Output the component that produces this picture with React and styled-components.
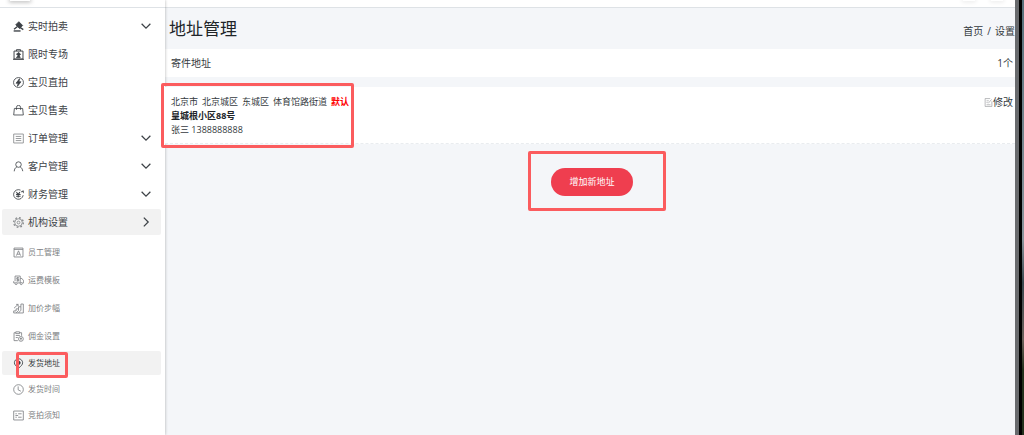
import React from 'react'
import styled, { createGlobalStyle } from 'styled-components'

const GlobalStyle = createGlobalStyle`
  * {
    box-sizing: border-box;
  }
  body {
    margin: 0;
    overflow: hidden;
    background: #f4f6f9;
    color: #343a40;
    font-family: 'Open Sans', 'Noto Sans CJK SC', sans-serif;
    font-size: 10px;
    line-height: 14px;
  }
`

const icons = {
  gavel: (
    <>
      <path d='M4 5.5 8.500 1l5.500 5.500L9.500 11z' fill='currentColor' />
      <path d='M6.500 8 1.500 12M9.500 9l5.500 3.500' strokeWidth='2' />
      <path d='M1 14.500h10' strokeWidth='2' />
    </>
  ),
  board: (
    <>
      <path d='M1.500 3h13v11.500h-13zM5 3V1h6v2M0 15h16' strokeWidth='1.4' />
      <path d='M5 7.500 8.500 5l2.500 3-2 1.500 1.500 3H5l2.500-3z' fill='currentColor' />
    </>
  ),
  bolt: (
    <>
      <circle cx='8' cy='8' r='7.200' />
      <path d='M9.500 2.500 4.500 9H7.500L6.500 13.500 11.500 7H8.500z' fill='currentColor' />
    </>
  ),
  bag: <path d='M2 5h12l1 9.500H1zM5 7V3.500a3 3 0 0 1 6 0V7' />,
  list: <path d='M1 1.500h14v13H1zM4 5h8M4 8h8M4 11h8' />,
  user: <path d='M8 1.200a4 4 0 0 1 0 8 4 4 0 0 1 0-8zM5.500 8.700C3 10 2 12 1.800 15M10.500 8.700C13 10 13.600 12 14.200 14.800' />,
  money: (
    <>
      <path d='M14.800 9A7 7 0 1 1 11 1.700M15.200 6l-.7-4M11.500 4.200l4-1' />
      <path d='M5 4.500 7.500 8 10 4.500M4.500 8h6.500M4.500 10.500h6.500M7.500 8v4.500' strokeWidth='1.5' />
    </>
  ),
  gear: (
    <>
      <circle cx='8' cy='8' r='5.500' />
      <circle cx='8' cy='8' r='7' strokeWidth='2' strokeDasharray='2.500 3' />
      <circle cx='8' cy='8' r='2' />
    </>
  ),
  staff: <path d='M1.500 1.500h13v13h-13zM1.500 3.500h13M5 12.500l3-7 3 7M6 10.500h4' />,
  truck: (
    <>
      <path d='M3 11.500H1V9M3 9V1.500h7.500v10H6M10.500 5h2.500l2.500 3.500v3h-2' />
      <path d='M8.500 4H5.500v2.200h2.800v2.300H5M7 3v6.500' />
      <circle cx='4.500' cy='12.500' r='1.500' />
      <circle cx='12' cy='12.500' r='1.500' />
    </>
  ),
  steps: (
    <>
      <path d='M1 14.500v-3h3.500v-3H8v-3h3.500v-4H15v13zM1.500 7.500 7.500 2M4.500 2h3v3' />
      <path d='M4.500 14.500 8 11v-2.500M8 14.500l3.500-4V5.500' />
    </>
  ),
  clipboard: (
    <>
      <path d='M7 14H1.500V2.500H4M9.500 2.500h3V7M4 1.200h5.500v2.600H4zM4 6.500h6M4 9.500h3' />
      <circle cx='11.500' cy='11.500' r='3.500' />
      <path d='M11.500 9.500v4M10 11h3' />
    </>
  ),
  pin: (
    <>
      <path d='M8 15C4 11.500 2 9.500 2 7a6 6 0 0 1 12 0c0 2.500-2 4.500-6 8z' />
      <circle cx='8' cy='7' r='2.500' fill='currentColor' />
    </>
  ),
  clock: (
    <>
      <circle cx='8' cy='8' r='7' />
      <path d='M7.500 3.500V8.500l4 2' />
    </>
  ),
  notice: <path d='M1 1.500h14v13H1zM3.500 5.500h2M3.500 10.500h2M7.500 5.500h5M7.500 10.500h5M3.500 8h4' />,
  edit: <path d='M14 6v9H2V1h9M4.500 5h4M4.500 8h2M4.500 12h7M7.500 9.500l6-7' />,
  down: <path d='M1 4.500 8 11.500 15 4.500' />,
  right: <path d='M4.500 1 11.500 8 4.500 15' />
}

const Icon = ({ name, size = 11, weight = 1.2 }) => (
  <svg
    width={size}
    height={size}
    viewBox='0 0 16 16'
    fill='none'
    stroke='currentColor'
    strokeWidth={weight}
    aria-hidden='true'
  >
    {icons[name]}
  </svg>
)

const menu = [
  { label: '实时拍卖', icon: 'gavel', arrow: 'down' },
  { label: '限时专场', icon: 'board' },
  { label: '宝贝直拍', icon: 'bolt' },
  { label: '宝贝售卖', icon: 'bag' },
  { label: '订单管理', icon: 'list', arrow: 'down', soft: true },
  { label: '客户管理', icon: 'user', arrow: 'down' },
  { label: '财务管理', icon: 'money', arrow: 'down' },
  { label: '机构设置', icon: 'gear', arrow: 'right', soft: true, active: true }
]

const subMenu = [
  { label: '员工管理', icon: 'staff' },
  { label: '运费模板', icon: 'truck' },
  { label: '加价步幅', icon: 'steps' },
  { label: '佣金设置', icon: 'clipboard' },
  { label: '发货地址', icon: 'pin', active: true, compact: true },
  { label: '发货时间', icon: 'clock', compact: true },
  { label: '竞拍须知', icon: 'notice', compact: true }
]

const region = ['北京市', '北京城区', '东城区', '体育馆路街道']

const App = () => {
  return (
    <Page>
      <GlobalStyle />
      <Sidebar>
        <TopStrip><Shade /></TopStrip>
        <Menu>
          {menu.map((item) => (
            <li key={item.label}>
              <MenuLink href='#' $active={item.active}>
                <IconBox $soft={item.soft}><Icon name={item.icon} /></IconBox>
                <span>{item.label}</span>
                {item.arrow && <Icon name={item.arrow} size={10} weight={2} />}
              </MenuLink>
            </li>
          ))}
        </Menu>
        <SubMenu>
          {subMenu.map((item) => (
            <li key={item.label}>
              <SubLink href='#' $active={item.active} $compact={item.compact}>
                <IconBox><Icon name={item.icon} /></IconBox>
                <span>{item.label}</span>
                {item.active && <MenuMark />}
              </SubLink>
            </li>
          ))}
        </SubMenu>
      </Sidebar>

      <Main>
        <TopStrip $end>
          <Shade $faint />
          <Shade $faint />
        </TopStrip>
        {/* PAGE TITLE & BREADCRUMB */}
        <Header>
          <h1>地址管理</h1>
          <nav>
            <a href='#'>首页</a>
            <span>/</span>
            <a href='#'>设置</a>
          </nav>
        </Header>

        <Summary>
          <span>寄件地址</span>
          <span>1个</span>
        </Summary>

        {/* ADDRESS */}
        <AddressCard>
          <address>
            <Region>
              {region.map((part) => <span key={part}>{part}</span>)}
              <em>默认</em>
            </Region>
            <p><strong>皇城根小区88号</strong></p>
            <p>张三 1388888888</p>
          </address>
          <EditButton type='button'>
            <IconBox $soft><Icon name='edit' size={9} weight={1} /></IconBox>
            修改
          </EditButton>
          <AddressMark />
        </AddressCard>

        <Actions>
          <AddButton type='button'>
            增加新地址
            <ButtonMark />
          </AddButton>
        </Actions>
      </Main>

      <ScrollTrack />
      <Edge />
    </Page>
  )
}

const Page = styled.div`
  display: flex;
  min-height: 100vh;
`

const Sidebar = styled.aside`
  flex: 0 0 165px;
  background: #fff;
  box-shadow: 0 0 3px rgba(0, 0, 0, 0.3);
  z-index: 1;
`

const TopStrip = styled.div`
  display: flex;
  justify-content: ${({ $end }) => ($end ? 'flex-end' : 'flex-start')};
  gap: 16px;
  height: 8px;
  padding: 0 12px 0 10px;
  overflow: hidden;
  background: #fff;
  border-bottom: 1px solid #dee2e6;
`

const Shade = styled.div`
  width: ${({ $faint }) => ($faint ? '12px' : '20px')};
  height: 1px;
  box-shadow: 0 0 4px 1px ${({ $faint }) => ($faint ? 'rgba(0, 0, 0, 0.1)' : 'rgba(0, 0, 0, 0.35)')};
`

const Menu = styled.ul`
  margin: 0;
  padding: 5px 4px 0 2px;
  list-style: none;
  li {
    padding-bottom: 2px;
  }
`

const MenuLink = styled.a`
  display: flex;
  align-items: center;
  gap: 4px;
  height: 26px;
  padding: 0 10px 0 11px;
  border-radius: 2px;
  text-decoration: none;
  color: #3d4247;
  background: ${({ $active }) => ($active ? '#f2f2f2' : 'transparent')};
  span {
    flex: 1;
  }
`

const IconBox = styled.i`
  display: flex;
  color: ${({ $soft }) => ($soft ? '#85888b' : 'inherit')};
`

const SubMenu = styled(Menu)`
  padding-top: 2px;
`

const SubLink = styled(MenuLink)`
  position: relative;
  height: ${({ $compact }) => ($compact ? '24px' : '26px')};
  font-size: 8px;
  color: ${({ $active }) => ($active ? '#343a40' : '#7d8083')};
`

const Mark = styled.i`
  position: absolute;
  border: 3px solid #fb5c5e;
  border-radius: 2px;
  pointer-events: none;
`

const MenuMark = styled(Mark)`
  top: 1px;
  left: 14px;
  width: 52px;
  height: 26px;
`

const AddressMark = styled(Mark)`
  top: -4px;
  left: -4px;
  width: 193px;
  height: 65px;
  z-index: 2;
`

const ButtonMark = styled(Mark)`
  top: -17px;
  left: -23px;
  width: 138px;
  height: 60px;
`

const Main = styled.main`
  flex: 1;
  min-width: 0;
`

const Header = styled.header`
  display: flex;
  justify-content: space-between;
  align-items: center;
  height: 41px;
  padding-left: 4px;
  h1 {
    margin: 0;
    font-size: 17px;
    font-weight: 400;
    line-height: 24px;
    color: #212529;
  }
  nav {
    display: flex;
    gap: 4px;
    padding-top: 4px;
  }
  a {
    color: inherit;
    text-decoration: none;
  }
`

const Summary = styled.section`
  display: flex;
  justify-content: space-between;
  align-items: center;
  height: 28px;
  padding: 0 2px 0 6px;
  background: #fff;
`

const AddressCard = styled.section`
  position: relative;
  z-index: 2;
  display: flex;
  justify-content: space-between;
  align-items: flex-start;
  margin-top: 10px;
  padding: 8px 2px 6px 6px;
  background: #fff;
  border-bottom: 1px dashed #e9ecef;
  address {
    font-style: normal;
    font-size: 9px;
  }
  p {
    margin: 0;
  }
  strong {
    color: #212529;
  }
`

const Region = styled.div`
  display: flex;
  gap: 4px;
  em {
    font-style: normal;
    font-weight: 700;
    color: #f00;
  }
`

const EditButton = styled.button`
  display: flex;
  align-items: center;
  padding: 0;
  border: 0;
  background: none;
  color: inherit;
  font: inherit;
`

const Actions = styled.div`
  display: flex;
  justify-content: center;
  padding: 24px 0 24px 4px;
`

const AddButton = styled.button`
  position: relative;
  height: 28px;
  padding: 0 18px;
  border: 0;
  border-radius: 14px;
  background: #ef3e4f;
  color: #fff;
  font: inherit;
  font-size: 9px;
`

const ScrollTrack = styled.div`
  flex: 0 0 4px;
  background: #686a6d;
`

const Edge = styled.div`
  flex: 0 0 5px;
  background: linear-gradient(#56707a, #8a959c 55%, #39474e 65%, #6b625c 78%, #22301c 85%) right / 2px 100% no-repeat #000;
`

export default App
